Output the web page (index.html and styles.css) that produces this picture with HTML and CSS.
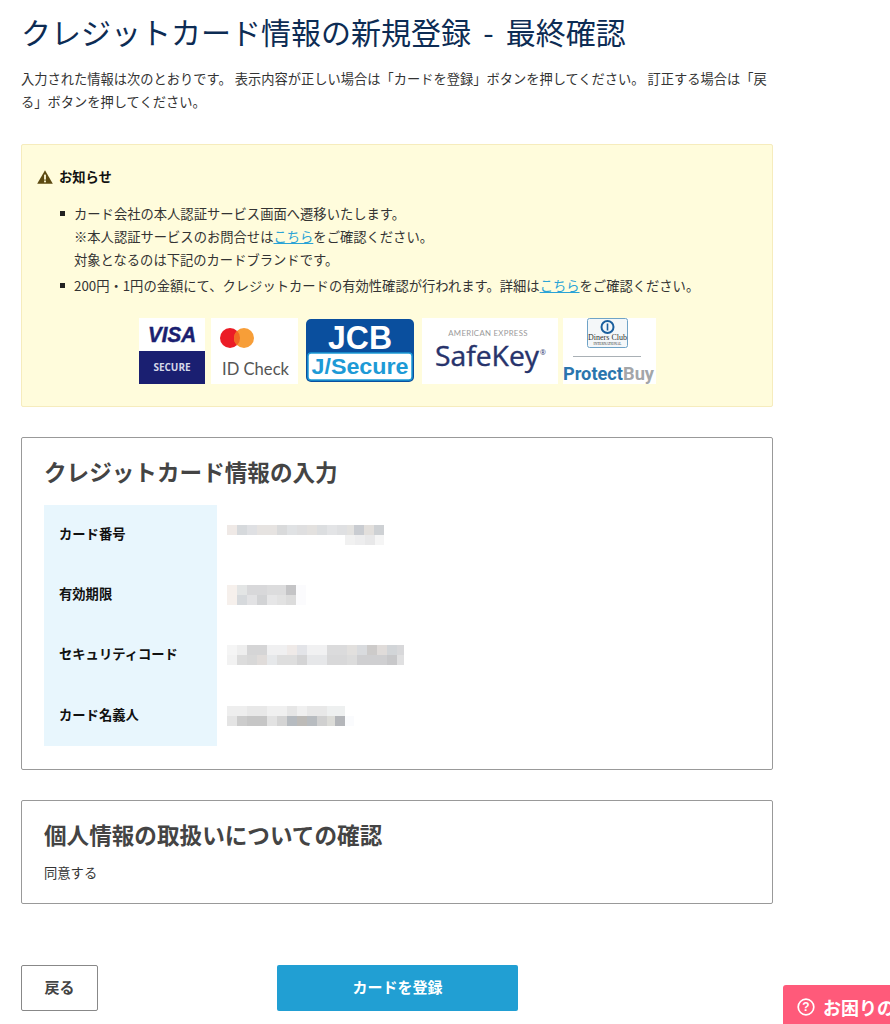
FILE: index.html
```html
<!DOCTYPE html>
<html lang="ja">
<head>
    <meta charset="UTF-8">
    <meta name="viewport" content="width=device-width, initial-scale=1.0">
    <title>クレジットカード情報の新規登録 - 最終確認</title>
    <link rel="stylesheet" href="styles.css">
</head>
<body>
    <main id="content">
        <h1>クレジットカード情報の新規登録 - 最終確認</h1>
        <p class="lead">入力された情報は次のとおりです。 表示内容が正しい場合は「カードを登録」ボタンを押してください。 訂正する場合は「戻る」ボタンを押してください。</p>

        <section class="notice">
            <h3 class="notice-title">
                <svg class="warn-icon" viewBox="0 0 16 14" width="16" height="14"><path d="M8 0.3 L15.8 13.8 H0.2 Z" fill="#5c4a12"/><rect x="7.1" y="4.6" width="1.8" height="5" fill="#fffcdc"/><rect x="7.1" y="10.5" width="1.8" height="1.8" fill="#fffcdc"/></svg>
                お知らせ
            </h3>
            <ul class="notice-list">
                <li>カード会社の本人認証サービス画面へ遷移いたします。<br>※本人認証サービスのお問合せは<a href="#">こちら</a>をご確認ください。<br>対象となるのは下記のカードブランドです。</li>
                <li>200円・1円の金額にて、クレジットカードの有効性確認が行われます。詳細は<a href="#">こちら</a>をご確認ください。</li>
            </ul>
            <div class="brands">
                <svg class="brand" viewBox="0 0 66 66" width="66" height="66">
                    <rect width="66" height="33" fill="#fff"/>
                    <rect y="33" width="66" height="33" fill="#1a1f71"/>
                    <text x="33" y="24" text-anchor="middle" class="visa" textLength="48" lengthAdjust="spacingAndGlyphs">VISA</text>
                    <text x="33" y="53" text-anchor="middle" class="visa-sub">SECURE</text>
                </svg>
                <svg class="brand" viewBox="0 0 87 66" width="87" height="66">
                    <rect width="87" height="66" fill="#fff"/>
                    <circle cx="19" cy="20" r="10" fill="#eb1c26"/>
                    <circle cx="33" cy="20" r="10" fill="#f79e38"/>
                    <path d="M26 12.8 a10 10 0 0 1 0 14.4 a10 10 0 0 1 0 -14.4 Z" fill="#f26a22"/>
                    <text x="11" y="57" class="idcheck" textLength="67" lengthAdjust="spacingAndGlyphs">ID Check</text>
                </svg>
                <svg class="brand brand-jcb" viewBox="0 0 110 66" width="110" height="66">
                    <rect x="1" y="1" width="108" height="63" rx="5" fill="#0a4f9e"/>
                    <rect x="3" y="35" width="104" height="27" rx="3" fill="#fff" stroke="#1d9ad6" stroke-width="1.500"/>
                    <text x="55" y="31" text-anchor="middle" class="jcb" textLength="64" lengthAdjust="spacingAndGlyphs">JCB</text>
                    <text x="55" y="56" text-anchor="middle" class="jsecure" textLength="97" lengthAdjust="spacingAndGlyphs">J/Secure</text>
                </svg>
                <svg class="brand brand-safekey" viewBox="0 0 136 66" width="136" height="66">
                    <rect width="136" height="66" fill="#fff"/>
                    <text x="66" y="18" text-anchor="middle" class="amex">AMERICAN EXPRESS</text>
                    <text x="13" y="48" class="safekey" textLength="104" lengthAdjust="spacingAndGlyphs">SafeKey</text>
                    <text x="118" y="37" class="reg">®</text>
                </svg>
                <svg class="brand" viewBox="0 0 93 66" width="93" height="66">
                    <rect width="93" height="66" fill="#fff"/>
                    <rect x="24.5" y="0.5" width="40" height="29" rx="2" fill="#f4f7f9" stroke="#6fa3c7"/>
                    <circle cx="44.500" cy="9" r="6" fill="none" stroke="#1b5f9e" stroke-width="2"/>
                    <rect x="43.700" y="5.500" width="1.600" height="7" fill="#1b5f9e"/>
                    <text x="44.500" y="22" text-anchor="middle" class="diners">Diners Club</text>
                    <text x="44.500" y="27" text-anchor="middle" class="diners-sub">INTERNATIONAL</text>
                    <line x1="10" y1="38.500" x2="78" y2="38.500" stroke="#a9b0b5"/>
                    <text x="0" y="62" class="protect" textLength="91" lengthAdjust="spacingAndGlyphs">Protect<tspan class="buy">Buy</tspan></text>
                </svg>
            </div>
        </section>

        <section class="card">
            <h2>クレジットカード情報の入力</h2>
            <dl class="info-table">
                <div class="info-row">
                    <dt>カード番号</dt>
                    <dd>
                        <svg viewBox="0 0 160 20" width="160" height="20" shape-rendering="crispEdges">
                            <rect x="0" width="10" height="10" fill="#efe9e6"/><rect x="10" width="10" height="10" fill="#d6d9dc"/><rect x="20" width="10" height="10" fill="#dfe0e3"/><rect x="30" width="20" height="10" fill="#e6e3e1"/><rect x="50" width="10" height="10" fill="#d9dadb"/><rect x="60" width="10" height="10" fill="#e0e2e4"/><rect x="70" width="10" height="10" fill="#dfdfe0"/><rect x="80" width="10" height="10" fill="#e3e1df"/><rect x="90" width="10" height="10" fill="#dcdee0"/><rect x="100" width="10" height="10" fill="#e3e4e6"/><rect x="110" width="10" height="10" fill="#dfe0e2"/><rect x="120" width="7" height="10" fill="#e3e2e0"/><rect x="127" width="10" height="10" fill="#c9ccd1"/><rect x="137" width="10" height="10" fill="#e2dfdc"/><rect x="147" width="10" height="10" fill="#ced1d4"/>
                            <rect x="118" y="10" width="10" height="10" fill="#f1f1f1"/><rect x="128" y="10" width="10" height="10" fill="#ededee"/><rect x="138" y="10" width="10" height="10" fill="#e8e8e9"/><rect x="148" y="10" width="9" height="10" fill="#f5f5f5"/>
                        </svg>
                    </dd>
                </div>
                <div class="info-row">
                    <dt>有効期限</dt>
                    <dd>
                        <svg viewBox="0 0 80 20" width="80" height="20" shape-rendering="crispEdges">
                            <rect x="0" width="10" height="10" fill="#f6f0ec"/><rect x="10" width="10" height="10" fill="#e3e5e5"/><rect x="20" width="20" height="10" fill="#d8d8da"/><rect x="40" width="19" height="10" fill="#dcdcdd"/><rect x="59" width="10" height="10" fill="#c4c4c6"/><rect x="69" width="10" height="10" fill="#fbfbfd"/>
                            <rect x="0" y="10" width="10" height="10" fill="#f6f0ec"/><rect x="10" y="10" width="10" height="10" fill="#d6d9dc"/><rect x="20" y="10" width="10" height="10" fill="#e2e2e4"/><rect x="30" y="10" width="10" height="10" fill="#d2d3d5"/><rect x="40" y="10" width="10" height="10" fill="#e6e6e7"/><rect x="50" y="10" width="9" height="10" fill="#e2e2e2"/><rect x="59" y="10" width="10" height="10" fill="#dcdcdc"/><rect x="69" y="10" width="10" height="10" fill="#fbfbfd"/>
                        </svg>
                    </dd>
                </div>
                <div class="info-row">
                    <dt>セキュリティコード</dt>
                    <dd>
                        <svg viewBox="0 0 177 20" width="177" height="20" shape-rendering="crispEdges">
                            <rect x="0" width="10" height="10" fill="#f5f5f5"/><rect x="10" width="10" height="10" fill="#eeeeee"/><rect x="20" width="20" height="10" fill="#d5d5d6"/><rect x="40" width="20" height="10" fill="#f0f0f1"/><rect x="60" width="10" height="10" fill="#efeae8"/><rect x="70" width="10" height="10" fill="#e3e4e8"/><rect x="80" width="20" height="10" fill="#f1f1f2"/><rect x="100" width="20" height="10" fill="#dbdbdc"/><rect x="120" width="10" height="10" fill="#e2e0de"/><rect x="130" width="10" height="10" fill="#d9dbde"/><rect x="140" width="10" height="10" fill="#cdcbca"/><rect x="150" width="10" height="10" fill="#e0dcda"/><rect x="160" width="10" height="10" fill="#d2d5d8"/><rect x="170" width="7" height="10" fill="#d8d8da"/>
                            <rect x="0" y="10" width="10" height="10" fill="#f2f2f2"/><rect x="10" y="10" width="10" height="10" fill="#dcdcdc"/><rect x="20" y="10" width="10" height="10" fill="#d8d8d8"/><rect x="30" y="10" width="10" height="10" fill="#e0dcda"/><rect x="40" y="10" width="10" height="10" fill="#e6e8ea"/><rect x="50" y="10" width="20" height="10" fill="#dedede"/><rect x="70" y="10" width="10" height="10" fill="#d4d4d5"/><rect x="80" y="10" width="20" height="10" fill="#e6e7e9"/><rect x="100" y="10" width="20" height="10" fill="#d8d8d9"/><rect x="120" y="10" width="10" height="10" fill="#dcdcdc"/><rect x="130" y="10" width="30" height="10" fill="#cfcfd1"/><rect x="160" y="10" width="10" height="10" fill="#c8c8ca"/><rect x="170" y="10" width="7" height="10" fill="#e0e0e1"/>
                        </svg>
                    </dd>
                </div>
                <div class="info-row">
                    <dt>カード名義人</dt>
                    <dd>
                        <svg viewBox="0 0 127 20" width="127" height="20" shape-rendering="crispEdges">
                            <rect x="0" width="20" height="10" fill="#eeeeee"/><rect x="20" width="20" height="10" fill="#e8e8e8"/><rect x="40" width="20" height="10" fill="#f0f0f0"/><rect x="60" width="10" height="10" fill="#e6e6e6"/><rect x="70" width="10" height="10" fill="#f0f0f0"/><rect x="80" width="20" height="10" fill="#e8e8e8"/><rect x="100" width="18" height="10" fill="#eef0f0"/>
                            <rect x="0" y="10" width="10" height="10" fill="#e4e4e4"/><rect x="10" y="10" width="10" height="10" fill="#cccccc"/><rect x="20" y="10" width="20" height="10" fill="#c6c6c6"/><rect x="40" y="10" width="10" height="10" fill="#e2e2e2"/><rect x="50" y="10" width="10" height="10" fill="#d4d4d4"/><rect x="60" y="10" width="10" height="10" fill="#b6bbc0"/><rect x="70" y="10" width="10" height="10" fill="#bdbbb8"/><rect x="80" y="10" width="10" height="10" fill="#b8bcc0"/><rect x="90" y="10" width="10" height="10" fill="#d0d0d0"/><rect x="100" y="10" width="8" height="10" fill="#dcdcd8"/><rect x="108" y="10" width="10" height="10" fill="#b4b6ba"/><rect x="118" y="10" width="9" height="10" fill="#fafbfd"/>
                        </svg>
                    </dd>
                </div>
            </dl>
        </section>

        <section class="card agree">
            <h2>個人情報の取扱いについての確認</h2>
            <p>同意する</p>
        </section>

        <div class="actions">
            <button class="btn-back">戻る</button>
            <button class="btn-submit">カードを登録</button>
        </div>
    </main>

    <a class="help-tab" href="#">
        <svg viewBox="0 0 18 18" width="18" height="18"><circle cx="9" cy="9" r="7.800" fill="none" stroke="#fff" stroke-width="1.700"/><text x="9" y="13.300" text-anchor="middle" class="help-q">?</text></svg>
        お困りの方はこちら
    </a>
</body>
</html>
```

FILE: styles.css
```css
* { box-sizing: border-box; }
body {
    font-family: "Noto Sans CJK JP", "Noto Sans", sans-serif;
    margin: 0;
    padding: 0;
    background: #ffffff;
    color: #333;
    font-size: 13.3px;
    overflow-x: hidden;
}
#content {
    width: 752px;
    margin-left: 21px;
    padding-top: 9px;
}
h1 {
    font-size: 30px;
    font-weight: 400;
    line-height: 44px;
    margin: 0;
    color: #0d2c54;
    word-spacing: 5.500px;
}
.lead {
    font-size: 13.25px;
    line-height: 23px;
    margin: 14px 0 0;
    color: #333;
}
.notice {
    margin-top: 31px;
    height: 263px;
    padding: 22px 15px 0;
    background: #fffcdc;
    border: 1px solid #f6ecbd;
    border-radius: 2px;
}
.notice-title {
    display: flex;
    align-items: center;
    gap: 6px;
    margin: 0;
    font-size: 13.3px;
    line-height: 20px;
    font-weight: 700;
    color: #111;
}
.notice-list {
    list-style: none;
    margin: 15px 0 0;
    padding: 0 0 0 37px;
    line-height: 23px;
}
.notice-list li {
    position: relative;
    margin-bottom: 3px;
}
.notice-list li::before {
    content: "";
    position: absolute;
    left: -14px;
    top: 9px;
    width: 5px;
    height: 5px;
    background: #222;
}
.notice-list a { color: #2aa3d6; }
.brands {
    display: flex;
    justify-content: center;
    gap: 6px;
    margin-top: 21px;
}
.brand { display: block; }
.brand-jcb { margin-left: 1px; }
.brand-safekey { margin: 0 -1px 0 1px; }
.visa { font: italic 700 22px "Liberation Sans", sans-serif; fill: #1a1f71; stroke: #1a1f71; stroke-width: 0.5px; }
.visa-sub { font: 700 10px "Open Sans", sans-serif; fill: #d5d7e8; }
.idcheck { font: 400 16.500px "Lato", sans-serif; fill: #555; }
.jcb { font: 700 33px "Liberation Sans", sans-serif; fill: #fff; }
.jsecure { font: 700 22px "Liberation Sans", sans-serif; fill: #1d9ad6; }
.amex { font: 400 7.800px "Lato", sans-serif; fill: #9a9a9a; letter-spacing: 0.3px; }
.safekey { font: 400 28px "Open Sans", sans-serif; fill: #27336b; stroke: #27336b; stroke-width: 0.4px; }
.reg { font: 400 7px "Open Sans", sans-serif; fill: #27336b; }
.diners { font: 400 8px "Liberation Serif", serif; fill: #333; }
.diners-sub { font: 400 3.500px "Liberation Serif", serif; fill: #333; }
.protect { font: 700 19px "Roboto", sans-serif; fill: #2a75ad; }
.buy { fill: #a3a6a9; }
.card {
    margin-top: 30px;
    padding: 18px 22px 23px;
    border: 1px solid #999;
    border-radius: 2px;
    background: #fff;
}
.card h2 {
    font-size: 22.600px;
    font-weight: 700;
    line-height: 32px;
    margin: 0;
    color: #444;
}
.info-table {
    margin: 17px 0 0;
    width: 100%;
}
.info-row {
    display: flex;
    height: 60px;
}
.info-row:last-child { height: 61px; }
.info-row dt {
    width: 173px;
    padding: 0 0 3px 15px;
    background: #e8f6fd;
    font-weight: 700;
    color: #111;
    display: flex;
    align-items: center;
}
.info-row dd {
    margin: 0;
    padding-left: 10px;
    display: flex;
    align-items: center;
}
.info-row svg { display: block; filter: blur(0.6px); }
.agree p {
    margin: 10px 0 0;
    line-height: 23px;
}
.agree { padding-bottom: 19px; }
.actions {
    display: flex;
    margin-top: 61px;
    padding-bottom: 13px;
}
button {
    font-family: inherit;
    font-size: 15px;
    font-weight: 700;
    height: 46px;
    padding: 0 0 3px;
    border-radius: 2px;
    cursor: pointer;
}
.btn-back {
    width: 77px;
    background: #fff;
    border: 1px solid #888;
    color: #444;
}
.btn-submit {
    width: 241px;
    margin-left: 179px;
    background: #219fd3;
    border: none;
    color: #fff;
}
.help-tab {
    position: fixed;
    left: 783px;
    top: 985px;
    display: flex;
    align-items: center;
    gap: 8px;
    width: 240px;
    height: 50px;
    padding: 0 0 6px 14px;
    background: #ff5a7a;
    border-radius: 3px 3px 0 0;
    color: #fff;
    font-size: 18px;
    font-weight: 700;
    text-decoration: none;
    white-space: nowrap;
}
.help-q { font: 700 12px "Liberation Sans", sans-serif; fill: #fff; }
```
